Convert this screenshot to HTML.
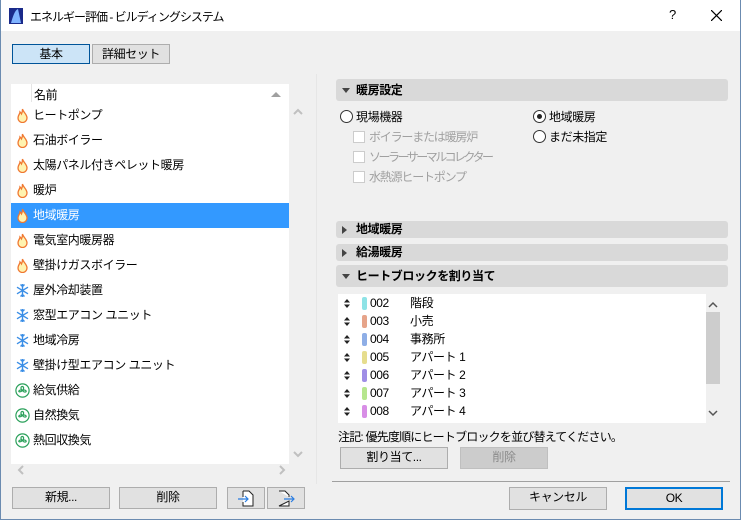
<!DOCTYPE html>
<html><head><meta charset="utf-8"><style>
*{margin:0;padding:0;box-sizing:border-box}
body{width:741px;height:520px;background:#f0f0f0;font-family:"Liberation Sans","Noto Sans CJK JP",sans-serif;font-size:12px;color:#000;position:relative;overflow:hidden;letter-spacing:-0.4px}
.a{position:absolute}
.btn{position:absolute;background:#e1e1e1;border:1px solid #adadad;text-align:center;line-height:19px;font-size:12px}
.row{position:absolute;left:11px;width:278px;height:25px;line-height:25px;padding-left:22px}
.ic{position:absolute;left:4px;top:5px;width:15px;height:15px}
.hdr{position:absolute;left:336px;width:392px;background:#d9d9d9;border-radius:3px;font-weight:bold;padding-left:20px}
.tri{position:absolute;left:6px;width:0;height:0}
.rad{position:absolute;width:13px;height:13px;border:1px solid #333;border-radius:50%;background:#fff}
.chk{position:absolute;width:12px;height:12px;border:1px solid #ccc;background:#fff}
.g{color:#a0a0a0}
.br{position:absolute;left:338px;width:360px;height:18px;line-height:18px}
.sw{position:absolute;left:24px;top:3px;width:5px;height:13px;border-radius:2px}
</style></head><body>
<div class="a" style="left:0;top:0;width:741px;height:31px;background:#fff"></div>
<div class="a" style="left:0;top:0;width:1px;height:520px;background:#6b8bb0"></div>
<div class="a" style="left:0;top:519px;width:741px;height:1px;background:#6b8bb0"></div>
<div class="a" style="left:740px;top:0;width:1px;height:520px;background:#6b8bb0"></div>
<svg class="a" style="left:9px;top:8px" width="14" height="16"><rect width="14" height="16" fill="#1a2a8a"/><path d="M2 15 C4 8 6 2 9 1 L12 15Z" fill="#7fb3ff"/></svg>
<div class="a" style="left:30px;top:8px;font-size:12px;letter-spacing:-1px">エネルギー評価 - ビルディングシステム</div>
<div class="a" style="left:669px;top:7px;font-size:13px">?</div>
<svg class="a" style="left:711px;top:10px" width="11" height="11"><path d="M0 0L11 11M11 0L0 11" stroke="#000" stroke-width="1.2"/></svg>

<div class="btn" style="left:12px;top:44px;width:78px;height:20px;background:#cce4f7;border-color:#005499">基本</div>
<div class="btn" style="left:92px;top:44px;width:78px;height:20px">詳細セット</div>

<div class="a" style="left:316px;top:74px;width:424px;height:410px;background:#f0f0f0;border-left:1px solid #e6e6e6"></div>
<div class="a" style="left:11px;top:84px;width:278px;height:380px;background:#fff"></div>
<div class="a" style="left:31px;top:84px;width:1px;height:18px;background:#e5e5e5"></div>
<div class="a" style="left:34px;top:86px">名前</div>
<div class="a" style="left:271px;top:92px;width:0;height:0;border-left:5px solid transparent;border-right:5px solid transparent;border-bottom:5px solid #a0a0a0"></div>
<svg class="a" style="left:293px;top:108px" width="10" height="8"><path d="M1 6L5 2L9 6" stroke="#c0c0c0" stroke-width="2" fill="none"/></svg>
<svg class="a" style="left:293px;top:450px" width="10" height="8"><path d="M1 2L5 6L9 2" stroke="#c0c0c0" stroke-width="2" fill="none"/></svg>
<svg class="a" style="left:17px;top:465px" width="8" height="10"><path d="M6 1L2 5L6 9" stroke="#c0c0c0" stroke-width="2" fill="none"/></svg>
<svg class="a" style="left:278px;top:465px" width="8" height="10"><path d="M2 1L6 5L2 9" stroke="#c0c0c0" stroke-width="2" fill="none"/></svg>

<div id="rows"></div>
<script>
var items=[["ヒートポンプ","f"],["石油ボイラー","f"],["太陽パネル付きペレット暖房","f"],["暖炉","f"],["地域暖房","f"],["電気室内暖房器","f"],["壁掛けガスボイラー","f"],["屋外冷却装置","s"],["窓型エアコン ユニット","s"],["地域冷房","s"],["壁掛け型エアコン ユニット","s"],["給気供給","v"],["自然換気","v"],["熱回収換気","v"]];
var h="";
var fl='<svg class="ic" viewBox="0 0 15 15"><path d="M7.5 1C8 4 12 6 12 10A4.5 4.5 0 0 1 3 10C3 7 5 6 5 4C6 5 6.5 6 6.5 6C7.5 4 7.5 2 7.5 1Z" fill="#fff3b0" stroke="#f07830" stroke-width="1.3"/></svg>';
var sn='<svg class="ic" viewBox="0 0 15 15" stroke="#3a8ee6" stroke-width="1.4" fill="none"><path d="M7.5 1V14M2 4.2L13 10.8M2 10.8L13 4.2M5.5 1.5L7.5 3.5L9.5 1.5M5.5 13.5L7.5 11.5L9.5 13.5"/></svg>';
var vn='<svg class="ic" viewBox="0 0 15 15" fill="none" stroke="#2aa05a" stroke-width="1.2"><circle cx="7.5" cy="7.5" r="6.6"/><path d="M7.5 7.5C5 6 6 3 7.5 3.5C9 4 9 6 7.5 7.5ZM7.5 7.5C9 10 12 9 11 7.8C10 6.8 8.5 7 7.5 7.5ZM7.5 7.5C5.5 9.5 3 9 4 7.8C5 6.8 6.5 7 7.5 7.5Z"/></svg>';
items.forEach(function(it,i){var t=103+i*25;var sel=i==4;
h+='<div class="row" style="top:'+t+'px;'+(sel?'background:#3399ff;color:#fff;':'')+'">'+(it[1]=="f"?fl:it[1]=="s"?sn:vn)+it[0]+'</div>';});
document.getElementById("rows").innerHTML=h;
</script>

<div class="btn" style="left:12px;top:487px;width:98px;height:22px">新規...</div>
<div class="btn" style="left:119px;top:487px;width:98px;height:22px">削除</div>
<div class="btn" style="left:227px;top:487px;width:38px;height:22px"><svg width="20" height="18" style="margin-top:1px"><path d="M7 2H13L17 6V17H7V13M7 8V2" fill="#fff" stroke="#222"/><path d="M2 10H12M9 7L12 10L9 13" stroke="#2a7de1" fill="none" stroke-width="1.2"/></svg></div>
<div class="btn" style="left:267px;top:487px;width:38px;height:22px"><svg width="20" height="18" style="margin-top:1px"><path d="M3 2H9L13 6V8M13 12V17H3Z" fill="#fff" stroke="#222"/><path d="M8 10H18M15 7L18 10L15 13" stroke="#2a7de1" fill="none" stroke-width="1.2"/></svg></div>

<div class="hdr" style="top:79px;height:22px;line-height:22px">暖房設定<div class="tri" style="top:9px;border-left:4px solid transparent;border-right:4px solid transparent;border-top:5px solid #444"></div></div>
<div class="rad" style="left:340px;top:110px"></div><div class="a" style="left:356px;top:108px">現場機器</div>
<div class="rad" style="left:533px;top:110px"></div><div class="a" style="left:537px;top:114px;width:5px;height:5px;border-radius:50%;background:#222"></div><div class="a" style="left:549px;top:108px">地域暖房</div>
<div class="rad" style="left:533px;top:130px"></div><div class="a" style="left:549px;top:128px">まだ未指定</div>
<div class="chk" style="left:353px;top:131px"></div><div class="a g" style="left:369px;top:128px;letter-spacing:-1.2px">ボイラーまたは暖房炉</div>
<div class="chk" style="left:353px;top:151px"></div><div class="a g" style="left:369px;top:148px;letter-spacing:-2.5px">ソーラーサーマルコレクター</div>
<div class="chk" style="left:353px;top:171px"></div><div class="a g" style="left:369px;top:168px;letter-spacing:-1.2px">水熱源ヒートポンプ</div>

<div class="hdr" style="top:221px;height:17px;line-height:17px">地域暖房<div class="tri" style="top:5px;border-top:4px solid transparent;border-bottom:4px solid transparent;border-left:5px solid #444"></div></div>
<div class="hdr" style="top:244px;height:17px;line-height:17px">給湯暖房<div class="tri" style="top:5px;border-top:4px solid transparent;border-bottom:4px solid transparent;border-left:5px solid #444"></div></div>
<div class="hdr" style="top:265px;height:22px;line-height:22px">ヒートブロックを割り当て<div class="tri" style="top:9px;border-left:4px solid transparent;border-right:4px solid transparent;border-top:5px solid #444"></div></div>

<div class="a" style="left:338px;top:294px;width:368px;height:129px;background:#fff"></div>
<div class="a" style="left:706px;top:312px;width:14px;height:72px;background:#cdcdcd"></div>
<svg class="a" style="left:708px;top:301px" width="10" height="8"><path d="M1 6L5 2L9 6" stroke="#555" stroke-width="1.5" fill="none"/></svg>
<svg class="a" style="left:708px;top:409px" width="10" height="8"><path d="M1 2L5 6L9 2" stroke="#555" stroke-width="1.5" fill="none"/></svg>
<div id="blk"></div>
<script>
var b=[["002","階段","#8ee3e6"],["003","小売","#e6a48a"],["004","事務所","#8eaee6"],["005","アパート 1","#e6dd8e"],["006","アパート 2","#9f8ee6"],["007","アパート 3","#b6e68e"],["008","アパート 4","#d88ee6"]];
var arr='<svg class="a" style="left:6px;top:5px" width="6" height="9"><path d="M0 3.5L3 0L6 3.5ZM0 5.5L3 9L6 5.5Z" fill="#222"/></svg>';
var s="";b.forEach(function(x,i){s+='<div class="br" style="top:'+(294+i*18)+'px">'+arr+'<div class="sw" style="background:'+x[2]+'"></div><span class="a" style="left:32px">'+x[0]+'</span><span class="a" style="left:72px">'+x[1]+'</span></div>';});
document.getElementById("blk").innerHTML=s;
</script>
<div class="a" style="left:338px;top:428px;letter-spacing:-0.8px">注記: 優先度順にヒートブロックを並び替えてください。</div>
<div class="btn" style="left:340px;top:447px;width:108px;height:22px">割り当て...</div>
<div class="btn" style="left:460px;top:447px;width:88px;height:22px;background:#cccccc;border-color:#bfbfbf;color:#8a8a8a">削除</div>
<div class="a" style="left:332px;top:481px;width:398px;height:1px;background:#a0a0a0"></div>
<div class="btn" style="left:509px;top:487px;width:98px;height:23px">キャンセル</div>
<div class="btn" style="left:625px;top:487px;width:98px;height:23px;border:2px solid #0078d7;line-height:19px">OK</div>
</body></html>
